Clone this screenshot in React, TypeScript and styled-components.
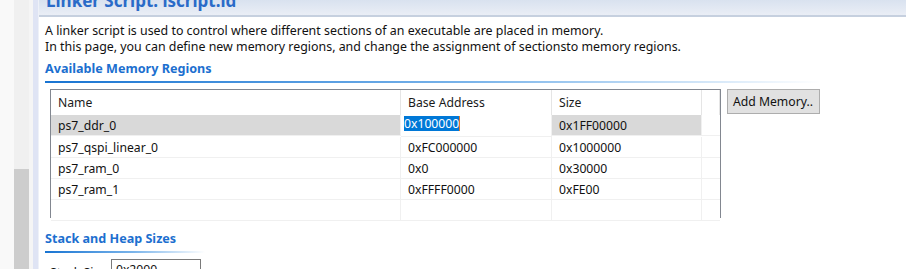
import * as React from 'react'
import styled, { createGlobalStyle } from 'styled-components'

const GlobalStyle = createGlobalStyle`
  html, body {
    margin: 0;
    padding: 0;
    background: #ffffff;
  }
  body {
    font-family: 'Noto Sans', 'Liberation Sans', Arial, sans-serif;
    font-size: 12px;
    color: #000;
  }
`

type Region = {
  name: string
  base: string
  size: string
}

const regions: Region[] = [
  { name: 'ps7_ddr_0', base: '0x100000', size: '0x1FF00000' },
  { name: 'ps7_qspi_linear_0', base: '0xFC000000', size: '0x1000000' },
  { name: 'ps7_ram_0', base: '0x0', size: '0x30000' },
  { name: 'ps7_ram_1', base: '0xFFFF0000', size: '0xFE00' },
]

const Page = styled.div`
  display: flex;
  width: 906px;
  height: 269px;
  overflow: hidden;
  background: #f8f8f8;
`

const Gutter = styled.div`
  width: 14px;
  background: #f9f9f9;
`

const ScrollTrack = styled.div`
  width: 15px;
  background: #f0f0f0;
  display: flex;
  flex-direction: column;
`

const ScrollThumb = styled.div`
  margin-top: 169px;
  flex: 1;
  background: #cdcdcd;
`

const Spacer = styled.div`
  width: 4px;
  background: #f5f5f5;
`

const EditorBorder = styled.div`
  width: 5px;
  background: #dfe4f4;
`

const Editor = styled.div`
  flex: 1;
  background: #fff;
  display: flex;
  flex-direction: column;
  border-left: 1px solid #eef1f8;
`

const Header = styled.div`
  height: 15px;
  flex: none;
  overflow: hidden;
  display: flex;
  align-items: flex-end;
  padding-left: 7px;
  background: linear-gradient(#d9e2ef, #eaeef6);
  border-bottom: 2px solid #c6d0df;
`

const Title = styled.div`
  flex: none;
  margin-bottom: 2px;
  font-size: 17px;
  font-weight: bold;
  line-height: 24px;
  color: #2a6bc8;
`

const Body = styled.div`
  padding: 6px 0 0 6px;
`

const Description = styled.div`
  font-size: 12.4px;
  line-height: 16px;
  color: #111;
`

const Section = styled.div<{ $lineWidth: number; $gap: number }>`
  margin-top: ${(p) => p.$gap}px;
  width: ${(p) => p.$lineWidth}px;
`

const SectionTitle = styled.div`
  font-size: 12.6px;
  font-weight: bold;
  line-height: 18px;
  color: #1c6fcf;
  padding-bottom: 3px;
`

const SectionRule = styled.div`
  height: 2px;
  background: linear-gradient(to right, #1874d2, #7ab4ea 55%, rgba(255, 255, 255, 0));
`

const TableRow = styled.div`
  display: flex;
  align-items: flex-start;
  margin-top: 6px;
  padding-left: 5px;
`

const TableBox = styled.div`
  width: 669px;
  height: 127px;
  border: 1px solid #828790;
  background: #fff;
`

const Grid = styled.div`
  display: grid;
  grid-template-columns: 350px 151px 150px 18px;
`

const HeadCell = styled.div`
  height: 25px;
  line-height: 25px;
  padding-left: 7px;
  font-size: 12.2px;
  color: #1a1a1a;
  border-right: 1px solid #e5e5e5;
  &:last-child {
    border-right: none;
  }
`

const Cell = styled.div<{ $selected?: boolean; $last?: boolean }>`
  height: 20px;
  line-height: 22px;
  padding-left: 7px;
  font-size: 12.2px;
  color: #111;
  background: ${(p) => (p.$selected ? '#d9d9d9' : '#fff')};
  border-right: 1px solid #f0f0f0;
  border-bottom: 1px solid #f0f0f0;
  ${(p) => p.$last && 'border-right: none;'}
`

const EditCell = styled.div`
  height: 20px;
  padding: 1px 0 0 3px;
  border-right: 1px solid #f0f0f0;
  border-bottom: 1px solid #f0f0f0;
  background: #fff;
  display: flex;
  align-items: flex-start;
`

const Highlight = styled.span`
  background: #0078d7;
  color: #fff;
  font-size: 12.2px;
  line-height: 15px;
  height: 15px;
`

const Caret = styled.span`
  width: 1px;
  height: 15px;
  background: #e0792a;
`

const Button = styled.button`
  margin-left: 6px;
  width: 93px;
  height: 25px;
  padding: 0 0 0 5px;
  text-align: left;
  font-family: 'Noto Sans', 'Liberation Sans', sans-serif;
  font-size: 12.2px;
  color: #111;
  background: #e1e1e1;
  border: 1px solid #adadad;
  border-radius: 0;
`

const FieldRow = styled.div`
  display: flex;
  align-items: flex-start;
  margin-top: 6px;
  padding-left: 5px;
  gap: 5px;
`

const FieldLabel = styled.div`
  font-size: 12.2px;
  line-height: 16px;
  padding-top: 6px;
  color: #111;
`

const FieldInput = styled.div`
  width: 84px;
  height: 20px;
  border: 1px solid #7a7a7a;
  padding-left: 4px;
  font-size: 12.2px;
  line-height: 20px;
  color: #111;
`

const App = () => {
  return (
    <>
      <GlobalStyle />
      <Page>
        <Gutter />
        <ScrollTrack>
          <ScrollThumb />
        </ScrollTrack>
        <Spacer />
        <EditorBorder />
        <Editor>
          <Header>
            <Title>Linker Script: lscript.ld</Title>
          </Header>
          <Body>
            <Description>
              A linker script is used to control where different sections of an executable are placed in memory.
              <br />
              In this page, you can define new memory regions, and change the assignment of sectionsto memory regions.
            </Description>
            <Section $lineWidth={775} $gap={5}>
              <SectionTitle>Available Memory Regions</SectionTitle>
              <SectionRule />
            </Section>
            <TableRow>
              <TableBox>
                <Grid>
                  <HeadCell>Name</HeadCell>
                  <HeadCell>Base Address</HeadCell>
                  <HeadCell>Size</HeadCell>
                  <HeadCell />
                  {regions.map((r, i) => (
                    <React.Fragment key={r.name}>
                      <Cell $selected={i === 0}>{r.name}</Cell>
                      {i === 0 ? (
                        <EditCell>
                          <Highlight>{r.base}</Highlight>
                          <Caret />
                        </EditCell>
                      ) : (
                        <Cell>{r.base}</Cell>
                      )}
                      <Cell $selected={i === 0}>{r.size}</Cell>
                      <Cell $last />
                    </React.Fragment>
                  ))}
                  <Cell />
                  <Cell />
                  <Cell />
                  <Cell $last />
                </Grid>
              </TableBox>
              <Button>Add Memory..</Button>
            </TableRow>
            <Section $lineWidth={160} $gap={12}>
              <SectionTitle>Stack and Heap Sizes</SectionTitle>
              <SectionRule />
            </Section>
            <FieldRow>
              <FieldLabel>Stack Size</FieldLabel>
              <FieldInput>0x2000</FieldInput>
            </FieldRow>
          </Body>
        </Editor>
      </Page>
    </>
  )
}

export default App
